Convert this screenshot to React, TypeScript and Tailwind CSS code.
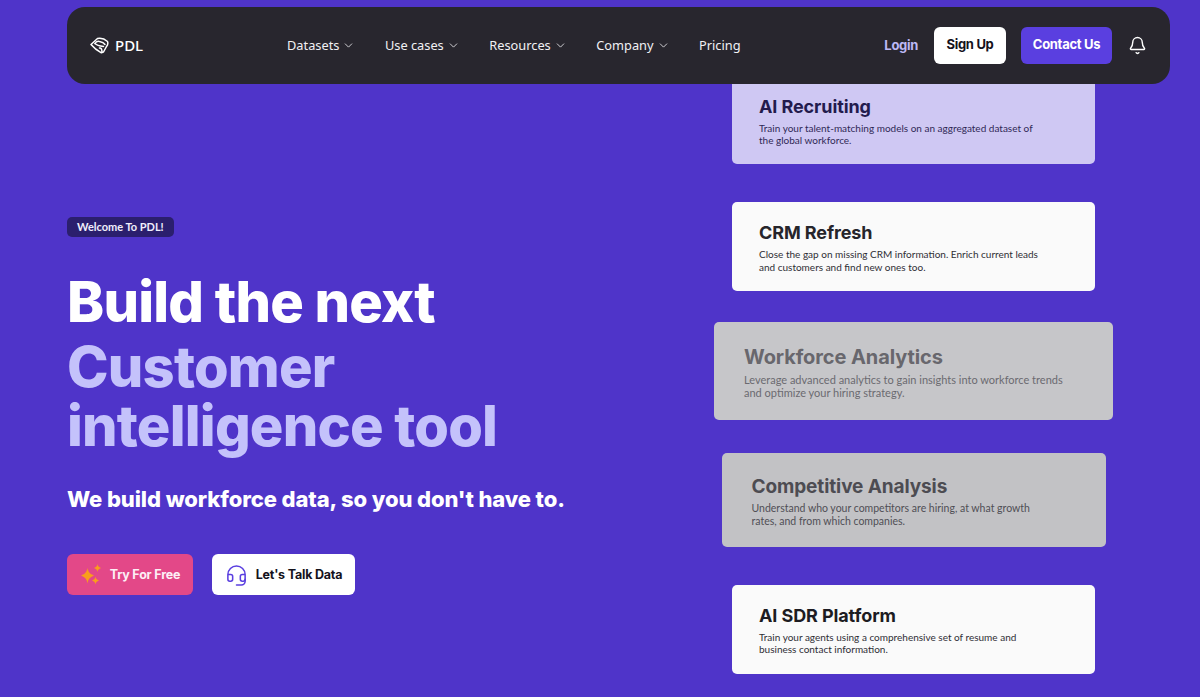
import { Bell, ChevronDown, Headset } from "lucide-react";

const NAV_LINKS = [
  { label: "Datasets", menu: true },
  { label: "Use cases", menu: true },
  { label: "Resources", menu: true },
  { label: "Company", menu: true },
  { label: "Pricing", menu: false },
];

function Logo() {
  return (
    <svg width="19" height="17" viewBox="0 0 19 17" fill="none" stroke="#fff" strokeWidth="1.5" strokeLinejoin="round" strokeLinecap="round">
      <path d="M1 7.500 7.500 1.500c3-.6 7 .3 10 3 .6 1.500.2 3.500-1 5l-3 5.500-2.500.7C8 14 4 11 1 7.500Z" />
      <path d="M5 6.500c1-2 2.500-2.500 4.500-2 2.500.5 4.500 1.500 5.500 3" />
      <path d="M5 6.500c2 2 5 2.500 8.500 3M9.500 11c1.500-.5 2.500 1 2.500 4.500" />
    </svg>
  );
}

function Sparkles() {
  return (
    <svg width="22" height="22" viewBox="0 0 22 22" fill="#f99d1c">
      <path d="M7.500 4c.8 4 2.200 5.700 6.500 7.500-4.300 1.800-5.700 3.500-6.500 8-.8-4.500-2.200-6.200-6.500-8C5.300 9.700 6.700 8 7.500 4Z" />
      <path d="M17.500 0c.4 2.200 1.200 3 3.500 4-2.300 1-3.100 1.800-3.500 4-.4-2.200-1.200-3-3.500-4 2.300-1 3.100-1.800 3.500-4Z" />
      <path d="M15.500 12.500c.4 2.200 1.200 3 3.500 4-2.300 1-3.100 1.800-3.500 4-.4-2.200-1.200-3-3.500-4 2.300-1 3.100-1.800 3.500-4Z" />
    </svg>
  );
}

function Navbar() {
  return (
    <nav className="absolute left-[67px] top-[7px] z-10 flex h-[77px] w-[1103px] items-center rounded-[18px] bg-[#28262e] pl-[23px] pr-[23px] text-white">
      <div className="flex w-[197px] items-center gap-[6px]">
        <Logo />
        <span className="font-['Noto_Sans',sans-serif] text-[15px] font-medium">PDL</span>
      </div>
      <ul className="flex items-center gap-[29.500px] font-['Noto_Sans',sans-serif] text-[12.8px] text-[#f1f1f4]">
        {NAV_LINKS.map((link) => (
          <li key={link.label} className="flex items-center gap-[3px]">
            {link.label}
            {link.menu && <ChevronDown size={13} strokeWidth={1.5} />}
          </li>
        ))}
      </ul>
      <div className="ml-auto flex items-center font-['Inter',sans-serif] text-[13px] font-bold tracking-[-0.3px]">
        <span className="mr-[16px] text-[#bdb8f5]">Login</span>
        <span className="mr-[15px] flex h-[37px] w-[72px] items-center justify-center rounded-[6px] bg-white pb-[2px] text-[#14121c]">Sign Up</span>
        <span className="mr-[16px] flex h-[37px] w-[91px] items-center justify-center rounded-[6px] bg-[#5a3fe0] pb-[2px]">Contact Us</span>
        <Bell size={19} strokeWidth={1.8} />
      </div>
    </nav>
  );
}

function Hero() {
  return (
    <section className="flex w-[714px] flex-col items-start pl-[67px] pt-[217px] font-['Inter',sans-serif]">
      <span className="flex h-[20px] items-center rounded-[5px] bg-[#2b1f6e] px-[10px] font-['Lato',sans-serif] text-[11px] font-bold text-[#f0eefc]">
        Welcome To PDL!
      </span>
      <h1 className="mt-[36px] text-[56px] font-extrabold leading-[59px] tracking-[-0.8px] text-white">
        Build the next
        <span className="mt-[6px] block text-[#c4c2fb]">Customer</span>
        <span className="block text-[#c4c2fb]">intelligence tool</span>
      </h1>
      <p className="mt-[27px] text-[22px] font-extrabold leading-[32px] tracking-[-0.1px] text-white">
        We build workforce data, so you don't have to.
      </p>
      <div className="mt-[39px] flex gap-[19px] text-[12.5px] font-bold tracking-[-0.2px]">
        <button className="flex h-[41px] w-[126px] items-center justify-center gap-[8px] rounded-[6px] bg-[#e34888] pt-[1px] text-[#fdeef5]">
          <Sparkles />
          Try For Free
        </button>
        <button className="flex h-[41px] w-[143px] items-center justify-center gap-[8px] rounded-[6px] bg-white pt-[1px] text-[#14121c]">
          <Headset size={23} strokeWidth={1.6} className="text-[#5a3fe0]" />
          Let's Talk Data
        </button>
      </div>
    </section>
  );
}

type CardProps = {
  title: string;
  lines: string[];
  box: string;
  titleClass: string;
  bodyClass: string;
};

function UseCaseCard({ title, lines, box, titleClass, bodyClass }: CardProps) {
  return (
    <div className={`flex flex-col rounded-[5px] ${box}`}>
      <h3 className={`mb-[3px] font-['Inter',sans-serif] font-bold tracking-[-0.1px] ${titleClass}`}>{title}</h3>
      {lines.map((line) => (
        <p key={line} className={`whitespace-nowrap ${bodyClass}`}>{line}</p>
      ))}
    </div>
  );
}

function Cards() {
  return (
    <section className="flex w-[399px] flex-col items-center font-['Lato',sans-serif]">
      <UseCaseCard
        title="AI Recruiting"
        lines={["Train your talent-matching models on an aggregated dataset of", "the global workforce."]}
        box="mt-[64px] h-[100px] w-[363px] bg-[#cfc8f3] pl-[27px] pt-[31px]"
        titleClass="text-[18px] leading-[24px] text-[#231b4d]"
        bodyClass="text-[10px] leading-[12px] text-[#2f2856]"
      />
      <UseCaseCard
        title="CRM Refresh"
        lines={["Close the gap on missing CRM information. Enrich current leads", "and customers and find new ones too."]}
        box="mt-[38px] h-[89px] w-[363px] bg-[#fafafa] pl-[27px] pt-[19px]"
        titleClass="text-[18px] leading-[24px] text-[#26252b]"
        bodyClass="text-[10px] leading-[12.500px] text-[#2f2e35]"
      />
      <UseCaseCard
        title="Workforce Analytics"
        lines={["Leverage advanced analytics to gain insights into workforce trends", "and optimize your hiring strategy."]}
        box="mt-[31px] h-[98px] w-[399px] bg-[#c6c6c9] pl-[30px] pt-[22px]"
        titleClass="text-[20px] leading-[26px] text-[#68676d]"
        bodyClass="text-[11px] leading-[13px] text-[#6b6a70]"
      />
      <UseCaseCard
        title="Competitive Analysis"
        lines={["Understand who your competitors are hiring, at what growth", "rates, and from which companies."]}
        box="mt-[33px] h-[94px] w-[384px] bg-[#c2c2c5] pl-[30px] pt-[21px]"
        titleClass="text-[19px] leading-[25px] text-[#4d4c52]"
        bodyClass="text-[10.500px] leading-[12.500px] text-[#504f55]"
      />
      <UseCaseCard
        title="AI SDR Platform"
        lines={["Train your agents using a comprehensive set of resume and", "business contact information."]}
        box="mt-[38px] h-[89px] w-[363px] bg-[#fafafa] pl-[27px] pt-[19px]"
        titleClass="text-[18px] leading-[24px] text-[#1d1c22]"
        bodyClass="text-[10px] leading-[12px] text-[#2f2e35]"
      />
    </section>
  );
}

export default function App() {
  return (
    <div className="relative flex h-[697px] w-[1200px] overflow-hidden bg-[#4f34c9]">
      <Navbar />
      <Hero />
      <Cards />
    </div>
  );
}
